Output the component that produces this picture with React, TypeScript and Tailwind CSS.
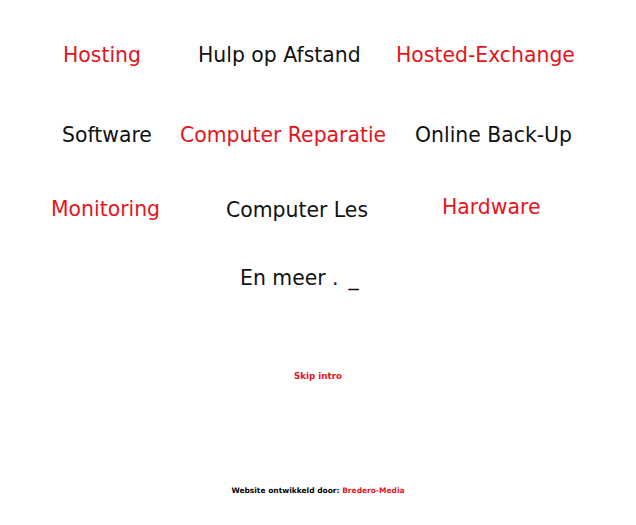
import React from "react";

const RED = "text-[#e5141b]";
const BLACK = "text-[#111111]";

export default function App() {
  return (
    <div
      className="w-[636px] h-[525px] bg-white flex flex-col overflow-hidden"
      style={{ fontFamily: '"DejaVu Sans", Verdana, sans-serif' }}
    >
      {/* Row 1 */}
      <div className="flex text-[20.4px] leading-[24px] mt-[43px] pl-[63px]">
        <span className={`w-[135px] shrink-0 ${RED}`}>Hosting</span>
        <span className={`w-[198px] shrink-0 ${BLACK}`}>Hulp op Afstand</span>
        <span className={`shrink-0 ${RED}`}>Hosted-Exchange</span>
      </div>
      {/* Row 2 */}
      <div className="flex text-[20.4px] leading-[24px] mt-[56px] pl-[62px]">
        <span className={`w-[118px] shrink-0 ${BLACK}`}>Software</span>
        <span className={`w-[235px] shrink-0 ${RED}`}>Computer Reparatie</span>
        <span className={`shrink-0 ${BLACK}`}>Online Back-Up</span>
      </div>
      {/* Row 3 */}
      <div className="flex items-start text-[20.4px] leading-[24px] mt-[48px] pl-[51px]">
        <span className={`w-[175px] shrink-0 mt-[2px] ${RED}`}>Monitoring</span>
        <span className={`w-[216px] shrink-0 mt-[3px] ${BLACK}`}>Computer Les</span>
        <span className={`shrink-0 ${RED}`}>Hardware</span>
      </div>
      {/* Row 4 */}
      <div className="flex text-[20.4px] leading-[24px] mt-[44px] pl-[240px]">
        <span className={BLACK}>
          En meer .<span className="ml-[10px]">_</span>
        </span>
      </div>
      {/* Skip intro */}
      <div className="flex justify-center mt-[81px]">
        <a className={`text-[8.7px] leading-[10px] font-bold ${RED}`} href="#">
          Skip intro
        </a>
      </div>
      {/* Footer */}
      <div className="flex justify-center mt-[105px]">
        <p className="text-[7.5px] leading-[10px] font-bold text-black">
          Website ontwikkeld door: <span className={RED}>Bredero-Media</span>
        </p>
      </div>
    </div>
  );
}
